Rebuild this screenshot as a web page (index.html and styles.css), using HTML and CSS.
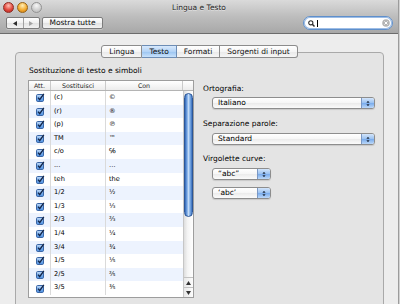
FILE: index.html
```html
<!DOCTYPE html>
<html>
<head>
    <meta charset="UTF-8">
    <title>Lingua e Testo</title>
    <link rel="stylesheet" href="styles.css">
</head>
<body>
<svg class="defs" width="0" height="0">
    <defs>
        <linearGradient id="cbfill" x1="0" y1="0" x2="0" y2="1">
            <stop offset="0" stop-color="#c9def8"/>
            <stop offset="0.5" stop-color="#78aeec"/>
            <stop offset="1" stop-color="#4f8fe0"/>
        </linearGradient>
        <symbol id="chk" viewBox="0 0 9 9">
            <rect x="0.5" y="1.5" width="7" height="7" rx="1.2" fill="url(#cbfill)" stroke="#3a66a6"/>
            <path d="M2 4.6 L3.7 6.6 L7.8 0.8" fill="none" stroke="#13264a" stroke-width="1.4"/>
        </symbol>
        <symbol id="updown" viewBox="0 0 5 8">
            <path d="M2.5 0.5 L4.5 3 L0.5 3 Z M2.5 7.5 L4.5 5 L0.5 5 Z" fill="#1d2a3d"/>
        </symbol>
    </defs>
</svg>
<div class="window">
    <div class="titlebar">
        <div class="titlerow">
            <div class="lights">
                <span class="light close"></span>
                <span class="light min"></span>
                <span class="light zoom"></span>
            </div>
            <div class="title">Lingua e Testo</div>
            <div></div>
        </div>
        <div class="toolbar">
            <div class="btn nav">
                <span><svg width="4" height="5" viewBox="0 0 4 5"><path d="M0 2.5 L4 0 L4 5 Z" fill="#2b2b2b"/></svg></span>
                <span><svg width="4" height="5" viewBox="0 0 4 5"><path d="M4 2.5 L0 0 L0 5 Z" fill="#a3a3a3"/></svg></span>
            </div>
            <div class="btn showall">Mostra tutte</div>
            <div class="search">
                <svg width="7" height="7" viewBox="0 0 7 7"><circle cx="2.8" cy="2.8" r="2.1" fill="none" stroke="#2f2f2f" stroke-width="1.1"/><path d="M4.3 4.3 L6.5 6.5" stroke="#2f2f2f" stroke-width="1.5"/></svg>
                <span class="caret"></span>
                <svg class="clear" width="8" height="8" viewBox="0 0 8 8"><circle cx="4" cy="4" r="3.8" fill="#b4b4b4"/><path d="M2.5 2.5 L5.5 5.5 M5.5 2.5 L2.5 5.5" stroke="#fff" stroke-width="1"/></svg>
            </div>
        </div>
    </div>

    <div class="content">
        <div class="tabs">
            <div class="tab">Lingua</div>
            <div class="tab active">Testo</div>
            <div class="tab">Formati</div>
            <div class="tab">Sorgenti di input</div>
        </div>
        <div class="tabbox">
            <div class="group">
                <div class="group-label">Sostituzione di testo e simboli</div>
                <div class="table">
                    <div class="thead">
                        <div>Att.</div>
                        <div>Sostituisci</div>
                        <div>Con</div>
                        <div></div>
                    </div>
                    <div class="tbody">
                        <div class="rows">
                            <div class="row"><span class="chk"><svg><use href="#chk"/></svg></span><span>(c)</span><span>©</span></div>
                            <div class="row"><span class="chk"><svg><use href="#chk"/></svg></span><span>(r)</span><span>®</span></div>
                            <div class="row"><span class="chk"><svg><use href="#chk"/></svg></span><span>(p)</span><span>℗</span></div>
                            <div class="row"><span class="chk"><svg><use href="#chk"/></svg></span><span>TM</span><span>™</span></div>
                            <div class="row"><span class="chk"><svg><use href="#chk"/></svg></span><span>c/o</span><span>℅</span></div>
                            <div class="row"><span class="chk"><svg><use href="#chk"/></svg></span><span>...</span><span>…</span></div>
                            <div class="row"><span class="chk"><svg><use href="#chk"/></svg></span><span>teh</span><span>the</span></div>
                            <div class="row"><span class="chk"><svg><use href="#chk"/></svg></span><span>1/2</span><span>½</span></div>
                            <div class="row"><span class="chk"><svg><use href="#chk"/></svg></span><span>1/3</span><span>⅓</span></div>
                            <div class="row"><span class="chk"><svg><use href="#chk"/></svg></span><span>2/3</span><span>⅔</span></div>
                            <div class="row"><span class="chk"><svg><use href="#chk"/></svg></span><span>1/4</span><span>¼</span></div>
                            <div class="row"><span class="chk"><svg><use href="#chk"/></svg></span><span>3/4</span><span>¾</span></div>
                            <div class="row"><span class="chk"><svg><use href="#chk"/></svg></span><span>1/5</span><span>⅕</span></div>
                            <div class="row"><span class="chk"><svg><use href="#chk"/></svg></span><span>2/5</span><span>⅖</span></div>
                            <div class="row"><span class="chk"><svg><use href="#chk"/></svg></span><span>3/5</span><span>⅗</span></div>
                        </div>
                        <div class="scrollbar">
                            <div class="thumb"></div>
                            <div class="arrow-btn"><svg width="5" height="4" viewBox="0 0 5 4"><path d="M2.5 0 L5 4 L0 4 Z" fill="#333"/></svg></div>
                            <div class="arrow-btn"><svg width="5" height="4" viewBox="0 0 5 4"><path d="M2.5 4 L5 0 L0 0 Z" fill="#333"/></svg></div>
                        </div>
                    </div>
                </div>
            </div>

            <div class="options">
                <div class="label">Ortografia:</div>
                <div class="popup wide first"><span class="val">Italiano</span><span class="arrow"><svg width="4" height="7"><use href="#updown"/></svg></span></div>

                <div class="label gap">Separazione parole:</div>
                <div class="popup wide"><span class="val">Standard</span><span class="arrow"><svg width="4" height="7"><use href="#updown"/></svg></span></div>

                <div class="label gap2">Virgolette curve:</div>
                <div class="popup small"><span class="val">“abc”</span><span class="arrow"><svg width="4" height="7"><use href="#updown"/></svg></span></div>
                <div class="popup small next"><span class="val">‘abc’</span><span class="arrow"><svg width="4" height="7"><use href="#updown"/></svg></span></div>
            </div>
        </div>
    </div>
</div>
</body>
</html>
```

FILE: styles.css
```css
* { box-sizing: border-box; }
html, body { margin: 0; padding: 0; }
body { width: 400px; height: 304px; overflow: hidden; background: #d2d2d2;
    font-family: "DejaVu Sans", sans-serif; font-size: 7.5px; color: #000; }
.defs { display: block; width: 0; height: 0; overflow: hidden; }

.window { width: 399px; height: 304px; border-right: 1px solid #9c9c9c; background: #ededed;
    display: flex; flex-direction: column; overflow: hidden; }

/* title bar + toolbar */
.titlebar { height: 34px; flex: none; border-bottom: 1px solid #6c6c6c;
    background: linear-gradient(#dadada, #bdbdbd 50%, #a8a8a8); }
.titlerow { height: 15px; display: grid; grid-template-columns: 1fr auto 1fr; }
.lights { display: flex; gap: 3px; padding: 2px 0 0 3px; }
.light { width: 11px; height: 11px; border-radius: 50%; }
.light.close { background: radial-gradient(circle at 50% 30%, #ffc0b5, #e2493e 55%, #b3221b);
    border: 1px solid #8d2c24; }
.light.min { background: radial-gradient(circle at 50% 30%, #ffefb8, #f4ad32 55%, #cc7610);
    border: 1px solid #976315; }
.light.zoom { background: radial-gradient(circle at 50% 30%, #f7f7f7, #cdcdcd 60%, #b5b5b5);
    border: 1px solid #939393; }
.title { line-height: 16px; color: #262626; text-shadow: 0 1px 0 rgba(255,255,255,0.45); }

.toolbar { height: 16px; display: flex; align-items: center; gap: 2px; padding: 0 5px 0 6px; }
.btn { height: 12px; border: 1px solid #7c7c7c; border-radius: 2px; line-height: 10px;
    background: linear-gradient(#ffffff, #f0f0f0 50%, #e2e2e2 51%, #f2f2f2);
    box-shadow: 0 1px 0 rgba(255,255,255,0.3); }
.nav { width: 34px; display: flex; }
.nav span { flex: 1; display: flex; align-items: center; justify-content: center; }
.nav span + span { border-left: 1px solid #a0a0a0; }
.nav svg { display: block; }
.showall { width: 61px; text-align: center; color: #111; }

.search { margin-left: auto; width: 90px; height: 14px; border-radius: 7px;
    border: 1px solid #5f8fcb; box-shadow: 0 0 0 1px #9dbde6 inset; background: #fff;
    display: flex; align-items: center; gap: 2px; padding: 0 2px 0 4px; }
.search svg { display: block; }
.caret { width: 1px; height: 7px; background: #000; }
.clear { margin-left: auto; }

/* tab view */
.content { flex: 1; min-height: 0; overflow: hidden; padding: 11px 14px 0 15px; }
.tabs { display: flex; justify-content: center; position: relative; z-index: 1; margin-bottom: -6px; }
.tab { height: 13px; padding: 0 7px; line-height: 11px; color: #111;
    border: 1px solid #8c8c8c; border-left: none;
    background: linear-gradient(#ffffff, #f5f5f5 50%, #e8e8e8 51%, #f6f6f6); }
.tab:first-child { border-left: 1px solid #8c8c8c; border-radius: 3px 0 0 3px; }
.tab:last-child { border-radius: 0 3px 3px 0; }
.tab.active { background: linear-gradient(#d8e9fc, #b3d3f6 50%, #98c3f1 51%, #c9e2fb);
    border-color: #6d8db5; }

.tabbox { height: 270px; border: 1px solid #a9a9a9; border-radius: 4px; background: #e4e4e4;
    padding: 13px 0 0 12px; display: flex; align-items: flex-start; }

/* replacement table */
.group { width: 166px; }
.group-label { line-height: 10px; padding-left: 1px; margin-bottom: 4px; }
.table { border: 1px solid #9d9d9d; background: #fff; }
.thead { display: grid; grid-template-columns: 22px 55px 77px 10px; height: 10px;
    border-bottom: 1px solid #b4b4b4; background: linear-gradient(#ffffff, #ececec);
    font-size: 6.3px; line-height: 9px; color: #222; }
.thead div { text-align: center; border-right: 1px solid #cacaca; }
.thead div:last-child { border-right: none; }
.tbody { display: flex; height: 206px; overflow: hidden; }
.rows { width: 154px; }
.row { display: grid; grid-template-columns: 22px 55px 77px; height: 13.6px;
    font-size: 6.6px; line-height: 13.6px; }
.row:nth-child(even) { background: #edf3fe; }
.row span { border-right: 1px solid #dadada; padding-left: 3px; white-space: nowrap; }
.row span:last-child { border-right: none; }
.row .chk { display: flex; align-items: center; justify-content: center; padding: 0 0 0 1px; }
.row .chk svg { width: 9px; height: 9px; display: block; }

.scrollbar { width: 10px; border-left: 1px solid #c6c6c6; display: flex; flex-direction: column;
    padding-top: 2px; background: linear-gradient(to right, #dedede, #f4f4f4 40%, #ffffff); }
.thumb { height: 124px; border-radius: 5px; border: 1px solid #2c5798;
    background: linear-gradient(to right, #3266b6, #74a5e3 28%, #c2daf7 50%, #7eaee6 72%, #3a6fbe); }
.arrow-btn { height: 10px; border-top: 1px solid #c2c2c2; display: flex; align-items: center;
    justify-content: center; background: linear-gradient(to right, #e8e8e8, #fdfdfd); }
.thumb + .arrow-btn { margin-top: auto; }
.arrow-btn svg { display: block; }

/* options */
.options { margin-left: 9px; padding-top: 18px; }
.label { line-height: 10px; }
.label.gap { margin-top: 10px; }
.label.gap2 { margin-top: 9px; }
.popup { display: flex; height: 12px; margin: 4px 0 0 9px; border: 1px solid #8d8d8d; border-radius: 3px;
    overflow: hidden; box-shadow: 0 1px 1px rgba(0,0,0,0.12);
    background: linear-gradient(#ffffff, #f6f6f6 50%, #ebebeb 51%, #fbfbfb); }
.popup.first { margin-top: 3px; }
.popup.next { margin-top: 7px; }
.popup.wide { width: 163px; }
.popup.small { width: 59px; }
.popup .val { flex: 1; padding-left: 5px; line-height: 10px; white-space: nowrap; }
.popup .arrow { width: 13px; border-left: 1px solid #7b98c4; display: flex; align-items: center;
    justify-content: center; background: linear-gradient(#d3e5fb, #99c1f1 50%, #77aaec 51%, #bcd8f8); }
.popup .arrow svg { display: block; }
```
